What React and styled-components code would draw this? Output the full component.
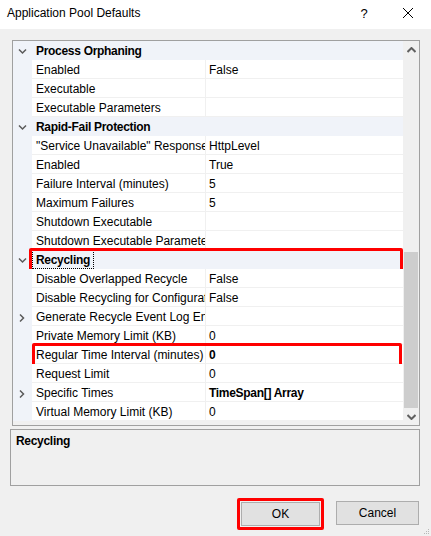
import React from 'react'
import styled, { createGlobalStyle } from 'styled-components'

const GlobalStyle = createGlobalStyle`
  html, body {
    margin: 0;
    padding: 0;
    background: #f0f0f0;
  }
  body {
    font-family: "Segoe UI", "Liberation Sans", Arial, sans-serif;
    font-size: 12px;
    color: #000;
  }
`

const rows = [
  { kind: 'cat', name: 'Process Orphaning' },
  { name: 'Enabled', value: 'False' },
  { name: 'Executable' },
  { name: 'Executable Parameters' },
  { kind: 'cat', name: 'Rapid-Fail Protection' },
  { name: '"Service Unavailable" Response Type', value: 'HttpLevel' },
  { name: 'Enabled', value: 'True' },
  { name: 'Failure Interval (minutes)', value: '5' },
  { name: 'Maximum Failures', value: '5' },
  { name: 'Shutdown Executable' },
  { name: 'Shutdown Executable Parameters' },
  { kind: 'cat', name: 'Recycling', focus: true, mark: { top: -2, bottom: -3, left: 16, right: 0 } },
  { name: 'Disable Overlapped Recycle', value: 'False' },
  { name: 'Disable Recycling for Configuration Changes', value: 'False' },
  { name: 'Generate Recycle Event Log Entry', expandable: true },
  { name: 'Private Memory Limit (KB)', value: '0' },
  { name: 'Regular Time Interval (minutes)', value: '0', bold: true, mark: { top: -2, bottom: -4, left: 19, right: 1 } },
  { name: 'Request Limit', value: '0' },
  { name: 'Specific Times', value: 'TimeSpan[] Array', bold: true, expandable: true },
  { name: 'Virtual Memory Limit (KB)', value: '0' },
]

function Chevron({ dir }) {
  const d = {
    down: 'M1 1.5 L4.5 5 L8 1.5',
    right: 'M2 0.5 L5.5 4 L2 7.5',
  }[dir]
  return (
    <svg width="9" height="8" viewBox="0 0 9 8">
      <path d={d} fill="none" stroke="#5a5a5a" strokeWidth="1.5" />
    </svg>
  )
}

function ScrollArrow({ up }) {
  return (
    <svg width="9" height="6" viewBox="0 0 9 6">
      <path
        d={up ? 'M0.5 5 L4.5 1 L8.5 5' : 'M0.5 1 L4.5 5 L8.5 1'}
        fill="none"
        stroke="#606060"
        strokeWidth="2"
      />
    </svg>
  )
}

function App() {
  return (
    <Window>
      <GlobalStyle />
      <TitleBar>
        <Title>Application Pool Defaults</Title>
        <TitleButton>?</TitleButton>
        <TitleButton>
          <svg width="12" height="12" viewBox="0 0 12 12">
            <path d="M1 1 L11 11 M11 1 L1 11" stroke="#000" strokeWidth="1" />
          </svg>
        </TitleButton>
      </TitleBar>

      <Grid>
        <Rows>
          {rows.map((r, i) => (
            <Row key={i} $cat={r.kind === 'cat'}>
              <Gutter>
                {r.kind === 'cat' && <Chevron dir="down" />}
                {r.expandable && <Chevron dir="right" />}
              </Gutter>
              {r.kind === 'cat' ? (
                <CatName>
                  <FocusText $focus={r.focus}>{r.name}</FocusText>
                </CatName>
              ) : (
                <>
                  <Name>{r.name}</Name>
                  <Value $bold={r.bold}>{r.value}</Value>
                </>
              )}
              {r.mark && <Mark style={{ top: r.mark.top, bottom: r.mark.bottom, left: r.mark.left, right: r.mark.right }} />}
            </Row>
          ))}
        </Rows>
        <ScrollBar>
          <ArrowBox><ScrollArrow up /></ArrowBox>
          <Track>
            <Thumb />
          </Track>
          <ArrowBox><ScrollArrow /></ArrowBox>
        </ScrollBar>
      </Grid>

      <Description>
        <DescTitle>Recycling</DescTitle>
      </Description>

      <Footer>
        <OkFrame>
          <Button $w={79}>OK</Button>
        </OkFrame>
        <Button $w={83} $drop>Cancel</Button>
      </Footer>
      <Grip>
        <svg width="6" height="6" viewBox="0 0 6 6">
          <rect x="4" y="0" width="1" height="1" fill="#b8b8b8" />
          <rect x="2" y="2" width="1" height="1" fill="#b8b8b8" />
          <rect x="4" y="2" width="1" height="1" fill="#b8b8b8" />
          <rect x="0" y="4" width="1" height="1" fill="#b8b8b8" />
          <rect x="2" y="4" width="1" height="1" fill="#b8b8b8" />
          <rect x="4" y="4" width="1" height="1" fill="#b8b8b8" />
        </svg>
      </Grip>
    </Window>
  )
}

const Window = styled.div`
  position: relative;
  width: 431px;
  height: 536px;
  background: #f0f0f0;
  display: flex;
  flex-direction: column;
  overflow: hidden;
`

const TitleBar = styled.div`
  height: 29px;
  background: #fff;
  display: flex;
  align-items: center;
  padding-left: 7px;
`

const Title = styled.div`
  flex: 1;
  font-size: 12px;
  margin-top: -3px;
`

const TitleButton = styled.div`
  width: 44px;
  height: 29px;
  display: flex;
  align-items: center;
  justify-content: center;
  font-size: 13px;
  margin-top: -3px;

  & + & {
    margin-right: 1px;
  }
`

const Grid = styled.div`
  margin: 11px 11px 0 12px;
  height: 384px;
  border: 1px solid #a0a0a0;
  display: flex;
`

const Rows = styled.div`
  flex: 1;
  display: flex;
  flex-direction: column;
  background: #f0f0f0;
`

const Row = styled.div`
  position: relative;
  height: 19px;
  display: flex;
  background: ${p => (p.$cat ? '#f0f3f9' : '#fff')};
`

const Gutter = styled.div`
  width: 19px;
  flex-shrink: 0;
  background: #f0f3f9;
  display: flex;
  align-items: center;
  justify-content: center;
  padding-top: 2px;
`

const Cell = styled.div`
  height: 18px;
  line-height: 20px;
  border-bottom: 1px solid #f0f0f0;
  white-space: nowrap;
  overflow: hidden;
`

const Name = styled(Cell)`
  width: 169px;
  padding-left: 4px;
  border-right: 1px solid #f0f0f0;
`

const Value = styled(Cell)`
  flex: 1;
  padding-left: 3px;
  font-weight: ${p => (p.$bold ? 700 : 400)};
  letter-spacing: ${p => (p.$bold ? '-0.3px' : '0')};
`

const CatName = styled.div`
  flex: 1;
  height: 19px;
  line-height: 19px;
  font-weight: 700;
  letter-spacing: -0.3px;
`

const FocusText = styled.span`
  display: inline-block;
  padding: 0 3px;
  height: 17px;
  line-height: 18px;
  border: 1px dotted ${p => (p.$focus ? '#000' : 'transparent')};
`

const Mark = styled.div`
  position: absolute;
  border: 3px solid #ff0000;
  border-radius: 2px;
  pointer-events: none;
`

const ScrollBar = styled.div`
  width: 16px;
  display: flex;
  flex-direction: column;
  background: #f0f0f0;
`

const ArrowBox = styled.div`
  height: 17px;
  display: flex;
  align-items: center;
  justify-content: center;
`

const Track = styled.div`
  flex: 1;
  display: flex;
  flex-direction: column;
  justify-content: flex-end;
  padding: 0 1px;
`

const Thumb = styled.div`
  height: 156px;
  background: #cdcdcd;
`

const Description = styled.div`
  margin: 3px 11px 0 10px;
  height: 57px;
  border: 1px solid #a0a0a0;
  padding: 4px 5px 0;
  box-sizing: border-box;
`

const DescTitle = styled.div`
  font-weight: 700;
  letter-spacing: -0.3px;
`

const Footer = styled.div`
  display: flex;
  justify-content: flex-end;
  align-items: flex-start;
  gap: 12px;
  margin-top: 12px;
  padding-right: 12px;
`

const OkFrame = styled.div`
  border: 3px solid #ff0000;
  border-radius: 2px;
  padding: 1px;
`

const Button = styled.div`
  width: ${p => p.$w - 2}px;
  height: 22px;
  border: 1px solid #adadad;
  background: #e1e1e1;
  display: flex;
  align-items: center;
  justify-content: center;
  font-size: 12px;
  margin-top: ${p => (p.$drop ? 3 : 0)}px;
`

const Grip = styled.div`
  position: absolute;
  right: 1px;
  bottom: 1px;
  line-height: 0;
`

export default App
